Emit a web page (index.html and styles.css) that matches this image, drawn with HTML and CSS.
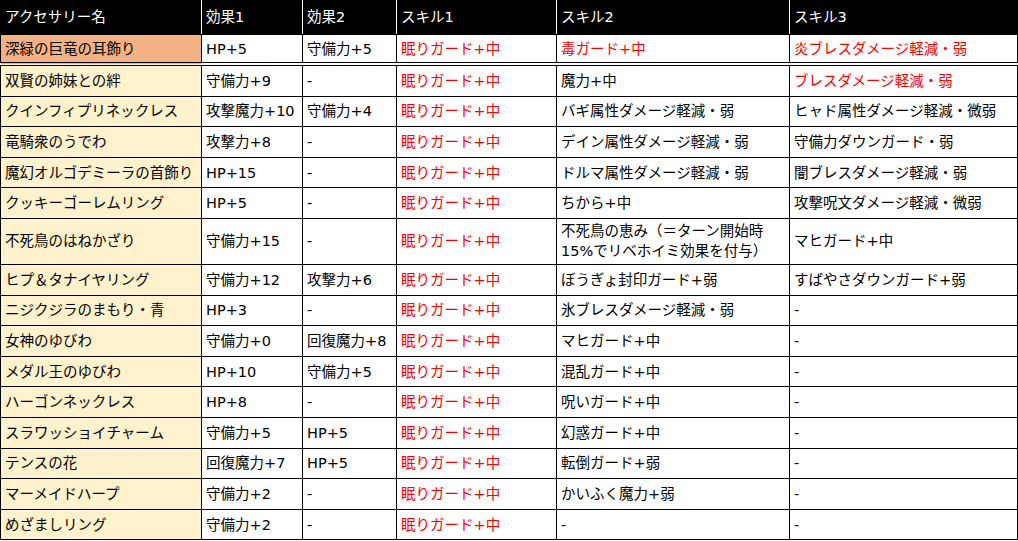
FILE: index.html
```html
<!DOCTYPE html>
<html lang="ja">
<head>
<meta charset="utf-8">
<title>アクセサリー一覧</title>
<link rel="stylesheet" href="styles.css">
</head>
<body>
<table class="acc">
  <colgroup>
    <col class="c1"><col class="c2"><col class="c3"><col class="c4"><col class="c5"><col class="c6">
  </colgroup>
  <thead>
    <tr class="head">
      <th>アクセサリー名</th><th>効果1</th><th>効果2</th><th>スキル1</th><th>スキル2</th><th>スキル3</th>
    </tr>
  </thead>
  <tbody>
    <tr class="first">
      <td class="name hl">深緑の巨竜の耳飾り</td><td>HP+5</td><td>守備力+5</td><td class="red">眠りガード+中</td><td class="red">毒ガード+中</td><td class="red">炎ブレスダメージ軽減・弱</td>
    </tr>
    <tr>
      <td class="name">双賢の姉妹との絆</td><td>守備力+9</td><td>-</td><td class="red">眠りガード+中</td><td>魔力+中</td><td class="red">ブレスダメージ軽減・弱</td>
    </tr>
    <tr>
      <td class="name">クインフィプリネックレス</td><td>攻撃魔力+10</td><td>守備力+4</td><td class="red">眠りガード+中</td><td>バギ属性ダメージ軽減・弱</td><td>ヒャド属性ダメージ軽減・微弱</td>
    </tr>
    <tr>
      <td class="name">竜騎衆のうでわ</td><td>攻撃力+8</td><td>-</td><td class="red">眠りガード+中</td><td>デイン属性ダメージ軽減・弱</td><td>守備力ダウンガード・弱</td>
    </tr>
    <tr>
      <td class="name">魔幻オルゴデミーラの首飾り</td><td>HP+15</td><td>-</td><td class="red">眠りガード+中</td><td>ドルマ属性ダメージ軽減・弱</td><td>闇ブレスダメージ軽減・弱</td>
    </tr>
    <tr>
      <td class="name">クッキーゴーレムリング</td><td>HP+5</td><td>-</td><td class="red">眠りガード+中</td><td>ちから+中</td><td>攻撃呪文ダメージ軽減・微弱</td>
    </tr>
    <tr class="tall">
      <td class="name">不死鳥のはねかざり</td><td>守備力+15</td><td>-</td><td class="red">眠りガード+中</td><td>不死鳥の恵み（＝ターン開始時<br>15%でリベホイミ効果を付与）</td><td>マヒガード+中</td>
    </tr>
    <tr>
      <td class="name">ヒプ＆タナイヤリング</td><td>守備力+12</td><td>攻撃力+6</td><td class="red">眠りガード+中</td><td>ぼうぎょ封印ガード+弱</td><td>すばやさダウンガード+弱</td>
    </tr>
    <tr>
      <td class="name">ニジクジラのまもり・青</td><td>HP+3</td><td>-</td><td class="red">眠りガード+中</td><td>氷ブレスダメージ軽減・弱</td><td>-</td>
    </tr>
    <tr>
      <td class="name">女神のゆびわ</td><td>守備力+0</td><td>回復魔力+8</td><td class="red">眠りガード+中</td><td>マヒガード+中</td><td>-</td>
    </tr>
    <tr>
      <td class="name">メダル王のゆびわ</td><td>HP+10</td><td>守備力+5</td><td class="red">眠りガード+中</td><td>混乱ガード+中</td><td>-</td>
    </tr>
    <tr>
      <td class="name">ハーゴンネックレス</td><td>HP+8</td><td>-</td><td class="red">眠りガード+中</td><td>呪いガード+中</td><td>-</td>
    </tr>
    <tr>
      <td class="name">スラワッショイチャーム</td><td>守備力+5</td><td>HP+5</td><td class="red">眠りガード+中</td><td>幻惑ガード+中</td><td>-</td>
    </tr>
    <tr>
      <td class="name">テンスの花</td><td>回復魔力+7</td><td>HP+5</td><td class="red">眠りガード+中</td><td>転倒ガード+弱</td><td>-</td>
    </tr>
    <tr>
      <td class="name">マーメイドハープ</td><td>守備力+2</td><td>-</td><td class="red">眠りガード+中</td><td>かいふく魔力+弱</td><td>-</td>
    </tr>
    <tr>
      <td class="name">めざましリング</td><td>守備力+2</td><td>-</td><td class="red">眠りガード+中</td><td>-</td><td>-</td>
    </tr>
  </tbody>
</table>
</body>
</html>
```
FILE: styles.css
```css
html, body {
  margin: 0;
  padding: 0;
  background: #ffffff;
}

body {
  font-family: "DejaVu Sans", "Noto Sans CJK JP", sans-serif;
  font-size: 14.5px;
  color: #000000;
}

.acc {
  border-collapse: collapse;
  table-layout: fixed;
  width: 1017px;
}

.c1 { width: 201px; }
.c2 { width: 101px; }
.c3 { width: 94px; }
.c4 { width: 160px; }
.c5 { width: 233px; }
.c6 { width: 228px; }

.acc th,
.acc td {
  padding: 0 0 0 4px;
  text-align: left;
  vertical-align: middle;
  font-weight: normal;
  white-space: nowrap;
  line-height: 20px;
  border: 1px solid #000000;
}

.head th {
  background: #000000;
  color: #ffffff;
  height: 34px;
  border-right: 1px solid #ffffff;
  border-top: 0;
  border-bottom: 1px solid #000000;
}

.head th:last-child {
  border-right: 1px solid #000000;
}

.acc td {
  height: 29.6px;
}

.first td {
  height: 27px;
  border-bottom: 4px double #000000;
}

.tall td {
  height: 45px;
}

.name {
  background: #fff2cc;
}

.name.hl {
  background: #f4b183;
}

.red {
  color: #ff0000;
}
```
